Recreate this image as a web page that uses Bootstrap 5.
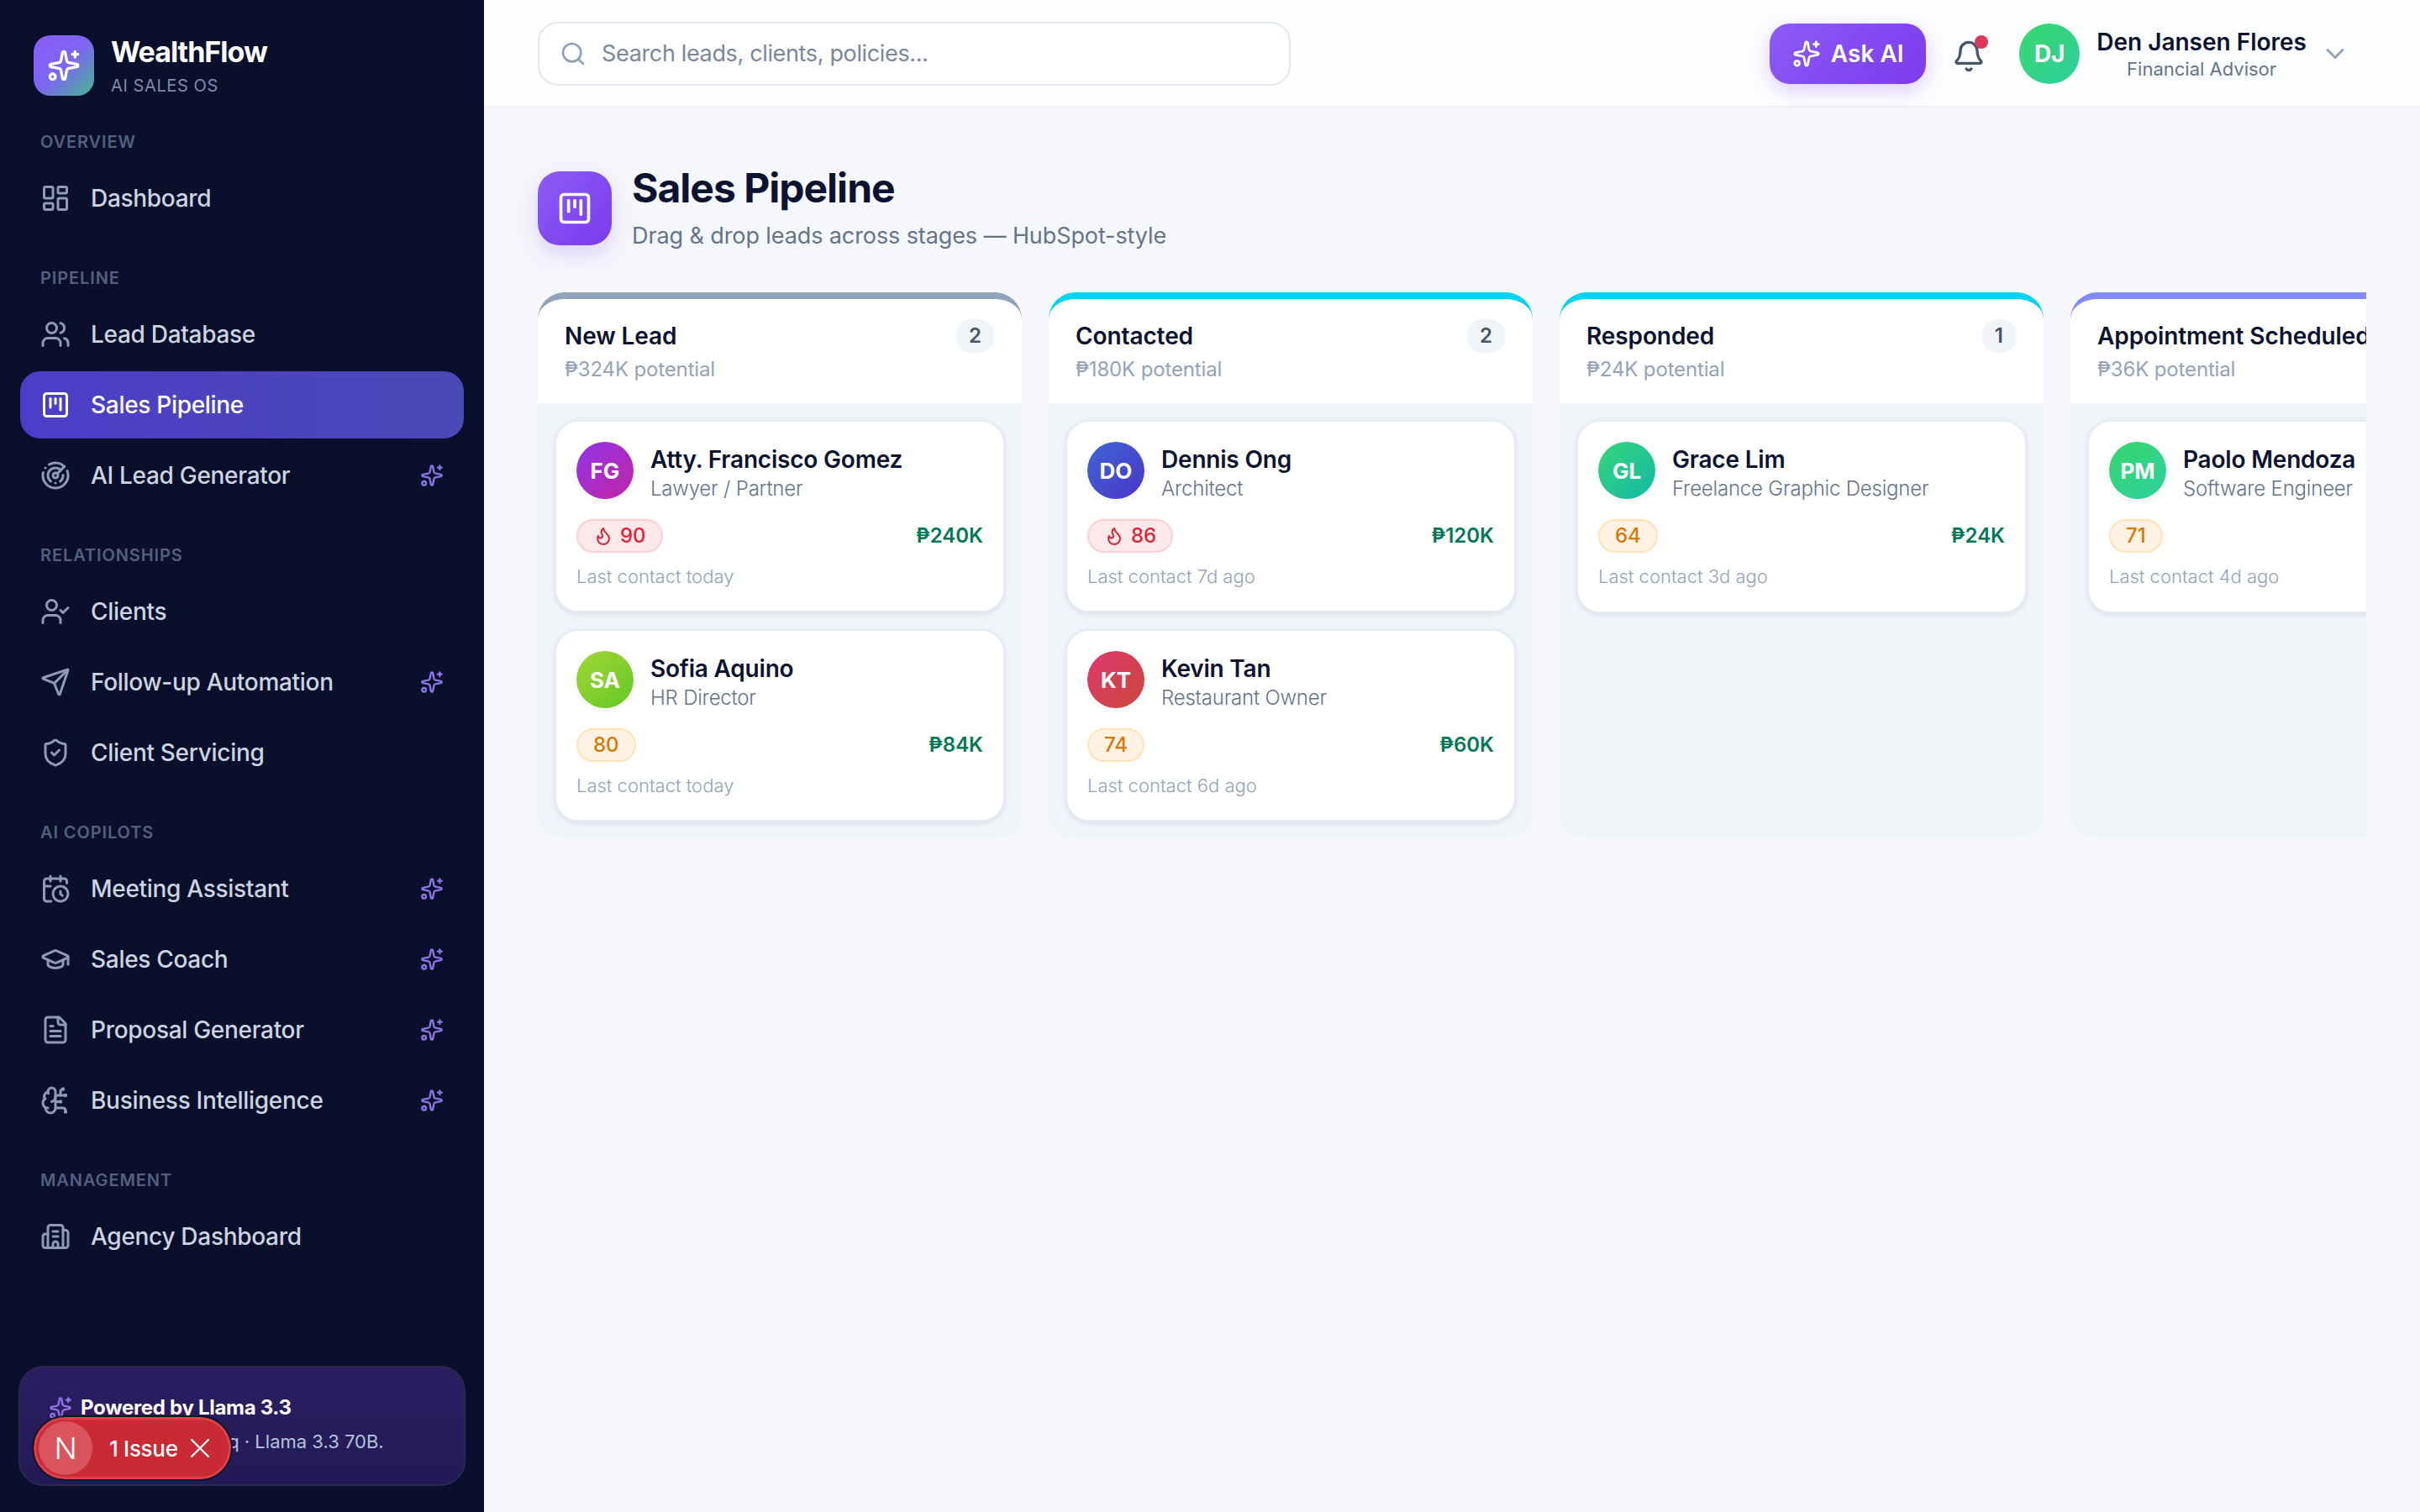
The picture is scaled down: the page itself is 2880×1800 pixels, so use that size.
<!DOCTYPE html>
<html lang="en">
<head>
<meta charset="UTF-8" />
<meta name="viewport" content="width=device-width, initial-scale=1.0" />
<title>WealthFlow - Sales Pipeline</title>
<link href="https://cdn.jsdelivr.net/npm/bootstrap@5.3.0/dist/css/bootstrap.min.css" rel="stylesheet" />
<style>
body { font-family: Inter, "Liberation Sans", sans-serif; background: #f5f7fb; color: #0b1330; font-size: 28px; }
.ico { fill: none; stroke: currentColor; stroke-width: 2; stroke-linecap: round; stroke-linejoin: round; flex-shrink: 0; }

/* sidebar */
.side { width: 576px; flex-shrink: 0; background: #0a0f2c; padding-top: 40px; }
.brand { padding-left: 40px; gap: 20px; margin-bottom: 38px; }
.brand-logo { width: 72px; height: 72px; border-radius: 20px; background: linear-gradient(135deg, #8b5cf6 0%, #7c66f2 50%, #42b98c 100%); color: #fff; }
.brand-name { font-size: 34px; line-height: 44px; font-weight: 700; color: #fff; letter-spacing: -1px; }
.brand-sub { font-size: 20px; line-height: 28px; color: #7c8bab; letter-spacing: .6px; margin-top: 4px; }
.sec { margin-bottom: 40px; }
.sec-label { font-size: 20px; line-height: 30px; font-weight: 600; color: #526080; letter-spacing: .9px; text-transform: uppercase; padding-left: 48px; margin-bottom: 12px; }
.nav-row { height: 80px; margin: 0 24px 4px; padding: 0 24px; border-radius: 24px; color: #cbd5e1; font-size: 28px; letter-spacing: -.3px; font-weight: 500; gap: 24px; text-decoration: none; }
.nav-row .ico-main { color: #8d9cb3; }
.nav-row .spark { color: #8f74e8; margin-left: auto; }
.nav-row.on { background: linear-gradient(90deg, #4c3dc8, #4a4ab6); color: #fff; }
.nav-row.on .ico-main { color: #fff; }
.llama { margin: 0 22px 31px; height: 143px; border-radius: 30px; border: 2px solid #2b2850; background: linear-gradient(180deg, #2b1e61, #221a56); padding: 30px 34px; }
.llama-top { font-size: 24px; font-weight: 700; color: #fff; gap: 10px; line-height: 36px; letter-spacing: -.3px; }
.llama-spark { color: #8f74e8; }
.llama-sub { font-size: 22px; color: #b6c3da; line-height: 32px; margin-top: 6px; white-space: nowrap; }
.issue { left: 40px; bottom: 39px; width: 235px; height: 74px; border-radius: 37px; background: #c92a34; border: 3px solid #dc4049; outline: 2px solid #111528; color: #fff; font-size: 26px; letter-spacing: -.3px; font-weight: 500; padding-left: 3px; }
.issue-n { width: 64px; height: 64px; border-radius: 50%; background: #d9545c; font-size: 36px; font-weight: 300; margin-right: 20px; }
.issue-x { margin-left: 6px; stroke-width: 1.4; }

/* top bar */
.topbar { height: 128px; background: #fdfeff; border-bottom: 2px solid #eef1f6; padding: 2px 64px 0; }
.search-box { width: 896px; height: 76px; border: 2px solid #e2e8f0; border-radius: 24px; background: #fff; padding-left: 24px; gap: 18px; }
.search-box svg { color: #8da0b8; }
.search-box input { border: 0; outline: 0; flex: 1; font-size: 27px; letter-spacing: -.35px; color: #0b1330; background: transparent; padding: 0; }
.search-box input::placeholder { color: #7b869c; opacity: 1; }
.ask-btn { height: 72px; width: 186px; border-radius: 24px; border: 0; background: linear-gradient(135deg, #8b5cf6, #7c3aed); color: #fff; font-size: 28px; font-weight: 600; gap: 12px; box-shadow: 0 8px 24px rgba(124, 58, 237, .25); }
.bell-wrap { width: 36px; height: 40px; margin: 0 44px 0 31px; color: #475569; }
.bell-dot { top: -2px; right: -7px; width: 16px; height: 16px; border-radius: 50%; background: #e0375a; }
.who-av { width: 72px; height: 72px; border-radius: 50%; background: linear-gradient(135deg, #38d86c, #2dcf9f); color: #fff; font-weight: 700; font-size: 28px; }
.who-name { font-size: 28px; font-weight: 600; line-height: 36px; }
.who-role { font-size: 22px; color: #64748b; line-height: 28px; text-align: center; }
.who-chev { color: #94a3b8; margin-right: 19px; }

/* pipeline */
.page { padding: 66px 64px 0; }
.page-icon { width: 88px; height: 88px; border-radius: 26px; background: linear-gradient(135deg, #8b5cf6, #7c3aed); color: #fff; box-shadow: 0 10px 24px rgba(124, 58, 237, .2); }
.page-title { font-size: 48px; font-weight: 700; line-height: 60px; letter-spacing: -1px; margin: 0; }
.page-sub { font-size: 27px; letter-spacing: -.1px; color: #64748b; line-height: 40px; margin-top: 7px; }
.board { gap: 32px; margin-top: 47px; }
.lane { width: 576px; flex-shrink: 0; }
.lane-head { height: 132px; background: #fff; border-top: 8px solid; border-radius: 32px 32px 0 0; padding: 24px 32px 0; }
.lane-title { font-size: 28px; font-weight: 600; line-height: 40px; white-space: nowrap; letter-spacing: -.1px; }
.lane-pot { font-size: 24px; letter-spacing: -.15px; color: #94a3b8; line-height: 36px; margin-top: 2px; }
.lane-n { height: 40px; padding: 0 16px; border-radius: 20px; background: #f1f5f9; color: #475569; font-size: 24px; font-weight: 600; }
.lane-body { background: #f1f4f9; border-radius: 0 0 32px 32px; padding: 20px; gap: 20px; height: 518px; }
.lead { height: 230px; background: #fff; border: 2px solid #e6ebf3; border-radius: 28px; padding: 24px; box-shadow: 0 2px 6px rgba(15, 23, 42, .1); }
.lead-top { gap: 20px; }
.lead-av { width: 68px; height: 68px; border-radius: 50%; color: #fff; font-weight: 700; font-size: 26px; box-shadow: 0 0 0 2px #fff, 0 2px 6px rgba(15, 23, 42, .08); flex-shrink: 0; }
.lead-txt { padding-top: 2px; }
.lead-name { font-size: 28px; font-weight: 600; letter-spacing: -.2px; line-height: 38px; white-space: nowrap; }
.lead-role { font-size: 24px; letter-spacing: -.2px; color: #64748b; line-height: 32px; white-space: nowrap; }
.lead-mid { margin-top: 20px; }
.score { height: 40px; border-radius: 20px; border: 2px solid; padding: 0 18px; font-size: 24px; font-weight: 500; gap: 8px; }
.score-hot { background: #fde8ea; border-color: #fbcfd5; color: #d92638; }
.score-warm { background: #fef3e2; border-color: #fde3b5; color: #d97706; }
.lead-val { font-size: 24px; font-weight: 600; color: #047857; }
.lead-last { font-size: 22px; color: #94a3b8; line-height: 30px; margin-top: 13px; }
.g-fg { background: linear-gradient(135deg, #9333ea, #c026a3); }
.g-do { background: linear-gradient(135deg, #3f66d6, #4a35c8); }
.g-sa { background: linear-gradient(135deg, #a3d635, #62c926); }
.g-kt { background: linear-gradient(135deg, #e0386e, #c9483c); }
.g-gl { background: linear-gradient(135deg, #34d67a, #14b8a6); }
.g-pm { background: linear-gradient(135deg, #38d86c, #2dcf9f); }
</style>
</head>
<body>
<!-- lucide icons -->
<svg width="0" height="0" class="position-absolute">
  <symbol id="i-spark" viewBox="0 0 24 24"><path d="M11.017 2.814a1 1 0 0 1 1.966 0l1.051 5.558a2 2 0 0 0 1.594 1.594l5.558 1.051a1 1 0 0 1 0 1.966l-5.558 1.051a2 2 0 0 0-1.594 1.594l-1.051 5.558a1 1 0 0 1-1.966 0l-1.051-5.558a2 2 0 0 0-1.594-1.594l-5.558-1.051a1 1 0 0 1 0-1.966l5.558-1.051a2 2 0 0 0 1.594-1.594z"/><path d="M20 2v4"/><path d="M22 4h-4"/><circle cx="4" cy="20" r="2"/></symbol>
  <symbol id="i-dash" viewBox="0 0 24 24"><rect x="3" y="3" width="7" height="9" rx="1"/><rect x="14" y="3" width="7" height="5" rx="1"/><rect x="14" y="12" width="7" height="9" rx="1"/><rect x="3" y="16" width="7" height="5" rx="1"/></symbol>
  <symbol id="i-users" viewBox="0 0 24 24"><path d="M16 21v-2a4 4 0 0 0-4-4H6a4 4 0 0 0-4 4v2"/><circle cx="9" cy="7" r="4"/><path d="M22 21v-2a4 4 0 0 0-3-3.87"/><path d="M16 3.13a4 4 0 0 1 0 7.75"/></symbol>
  <symbol id="i-kanban" viewBox="0 0 24 24"><rect x="3" y="3" width="18" height="18" rx="2"/><path d="M8 7v7"/><path d="M12 7v4"/><path d="M16 7v9"/></symbol>
  <symbol id="i-radar" viewBox="0 0 24 24"><path d="M19.07 4.93A10 10 0 0 0 6.99 3.34"/><path d="M4 6h.01"/><path d="M2.29 9.62A10 10 0 1 0 21.31 8.35"/><path d="M16.24 7.76A6 6 0 1 0 8.23 16.67"/><path d="M12 18h.01"/><path d="M17.99 11.66A6 6 0 0 1 15.77 16.67"/><circle cx="12" cy="12" r="2"/><path d="m13.41 10.59 5.66-5.66"/></symbol>
  <symbol id="i-ucheck" viewBox="0 0 24 24"><path d="M16 21v-2a4 4 0 0 0-4-4H6a4 4 0 0 0-4 4v2"/><circle cx="9" cy="7" r="4"/><polyline points="16 11 18 13 22 9"/></symbol>
  <symbol id="i-send" viewBox="0 0 24 24"><path d="M14.536 21.686a.5.5 0 0 0 .937-.024l6.5-19a.496.496 0 0 0-.635-.635l-19 6.5a.5.5 0 0 0-.024.937l7.93 3.18a2 2 0 0 1 1.112 1.11z"/><path d="m21.854 2.147-10.94 10.939"/></symbol>
  <symbol id="i-shield" viewBox="0 0 24 24"><path d="M20 13c0 5-3.5 7.5-7.66 8.95a1 1 0 0 1-.67-.01C7.5 20.5 4 18 4 13V6a1 1 0 0 1 1-1c2 0 4.5-1.2 6.24-2.72a1.17 1.17 0 0 1 1.52 0C14.51 3.81 17 5 19 5a1 1 0 0 1 1 1z"/><path d="m9 12 2 2 4-4"/></symbol>
  <symbol id="i-cal" viewBox="0 0 24 24"><path d="M21 7.5V6a2 2 0 0 0-2-2H5a2 2 0 0 0-2 2v14a2 2 0 0 0 2 2h3.5"/><path d="M16 2v4"/><path d="M8 2v4"/><path d="M3 10h5"/><path d="M17.5 17.5 16 16.3V14"/><circle cx="16" cy="16" r="6"/></symbol>
  <symbol id="i-cap" viewBox="0 0 24 24"><path d="M21.42 10.922a1 1 0 0 0-.019-1.838L12.83 5.18a2 2 0 0 0-1.66 0L2.6 9.08a1 1 0 0 0 0 1.832l8.57 3.908a2 2 0 0 0 1.66 0z"/><path d="M22 10v6"/><path d="M6 12.5V16a6 3 0 0 0 12 0v-3.5"/></symbol>
  <symbol id="i-file" viewBox="0 0 24 24"><path d="M15 2H6a2 2 0 0 0-2 2v16a2 2 0 0 0 2 2h12a2 2 0 0 0 2-2V7Z"/><path d="M14 2v4a2 2 0 0 0 2 2h4"/><path d="M10 9H8"/><path d="M16 13H8"/><path d="M16 17H8"/></symbol>
  <symbol id="i-brain" viewBox="0 0 24 24"><path d="M12 5a3 3 0 1 0-5.997.125 4 4 0 0 0-2.526 5.77 4 4 0 0 0 .556 6.588A4 4 0 1 0 12 18Z"/><path d="M9 13a4.5 4.5 0 0 0 3-4"/><path d="M6.003 5.125A3 3 0 0 0 6.401 6.5"/><path d="M3.477 10.896a4 4 0 0 1 .585-.396"/><path d="M6 18a4 4 0 0 1-1.967-.516"/><path d="M12 13h4"/><path d="M12 18h6a2 2 0 0 1 2 2v1"/><path d="M12 8h8"/><path d="M16 8V5a2 2 0 0 1 2-2"/><circle cx="16" cy="13" r=".5"/><circle cx="18" cy="3" r=".5"/><circle cx="20" cy="21" r=".5"/><circle cx="20" cy="8" r=".5"/></symbol>
  <symbol id="i-bldg" viewBox="0 0 24 24"><path d="M10 12h4"/><path d="M10 8h4"/><path d="M14 21v-3a2 2 0 0 0-4 0v3"/><path d="M6 10H4a2 2 0 0 0-2 2v7a2 2 0 0 0 2 2h16a2 2 0 0 0 2-2V9a2 2 0 0 0-2-2h-2"/><path d="M6 21V5a2 2 0 0 1 2-2h8a2 2 0 0 1 2 2v16"/></symbol>
  <symbol id="i-bell" viewBox="0 0 24 24"><path d="M10.268 21a2 2 0 0 0 3.464 0"/><path d="M3.262 15.326A1 1 0 0 0 4 17h16a1 1 0 0 0 .74-1.673C19.41 13.956 18 12.499 18 8A6 6 0 0 0 6 8c0 4.499-1.411 5.956-2.738 7.326"/></symbol>
  <symbol id="i-search" viewBox="0 0 24 24"><path d="m21 21-4.34-4.34"/><circle cx="11" cy="11" r="8"/></symbol>
  <symbol id="i-flame" viewBox="0 0 24 24"><path d="M8.5 14.5A2.5 2.5 0 0 0 11 12c0-1.38-.5-2-1-3-1.072-2.143-.224-4.054 2-6 .5 2.5 2 4.9 4 6.5 2 1.6 3 3.5 3 5.5a7 7 0 1 1-14 0c0-1.153.433-2.294 1-3a2.5 2.5 0 0 0 2.5 2.5z"/></symbol>
  <symbol id="i-chev" viewBox="0 0 24 24"><path d="m6 9 6 6 6-6"/></symbol>
  <symbol id="i-x" viewBox="0 0 24 24"><path d="M18 6 6 18"/><path d="m6 6 12 12"/></symbol>
</svg>

<div class="d-flex vh-100 overflow-hidden">
  <!-- Sidebar -->
  <aside class="side d-flex flex-column position-relative">
    <div class="brand d-flex align-items-center">
      <div class="brand-logo d-flex align-items-center justify-content-center"><svg class="ico" width="40" height="40"><use href="#i-spark"/></svg></div>
      <div>
        <div class="brand-name">WealthFlow</div>
        <div class="brand-sub">AI SALES OS</div>
      </div>
    </div>
    <nav class="flex-grow-1">
      <div class="sec">
        <div class="sec-label">Overview</div>
        <a class="nav-row d-flex align-items-center" href="#"><svg class="ico ico-main" width="36" height="36"><use href="#i-dash"/></svg>Dashboard</a>
      </div>
      <div class="sec">
        <div class="sec-label">Pipeline</div>
        <a class="nav-row d-flex align-items-center" href="#"><svg class="ico ico-main" width="36" height="36"><use href="#i-users"/></svg>Lead Database</a>
        <a class="nav-row on d-flex align-items-center" href="#"><svg class="ico ico-main" width="36" height="36"><use href="#i-kanban"/></svg>Sales Pipeline</a>
        <a class="nav-row d-flex align-items-center" href="#"><svg class="ico ico-main" width="36" height="36"><use href="#i-radar"/></svg>AI Lead Generator<svg class="ico spark" width="28" height="28"><use href="#i-spark"/></svg></a>
      </div>
      <div class="sec">
        <div class="sec-label">Relationships</div>
        <a class="nav-row d-flex align-items-center" href="#"><svg class="ico ico-main" width="36" height="36"><use href="#i-ucheck"/></svg>Clients</a>
        <a class="nav-row d-flex align-items-center" href="#"><svg class="ico ico-main" width="36" height="36"><use href="#i-send"/></svg>Follow-up Automation<svg class="ico spark" width="28" height="28"><use href="#i-spark"/></svg></a>
        <a class="nav-row d-flex align-items-center" href="#"><svg class="ico ico-main" width="36" height="36"><use href="#i-shield"/></svg>Client Servicing</a>
      </div>
      <div class="sec">
        <div class="sec-label">AI Copilots</div>
        <a class="nav-row d-flex align-items-center" href="#"><svg class="ico ico-main" width="36" height="36"><use href="#i-cal"/></svg>Meeting Assistant<svg class="ico spark" width="28" height="28"><use href="#i-spark"/></svg></a>
        <a class="nav-row d-flex align-items-center" href="#"><svg class="ico ico-main" width="36" height="36"><use href="#i-cap"/></svg>Sales Coach<svg class="ico spark" width="28" height="28"><use href="#i-spark"/></svg></a>
        <a class="nav-row d-flex align-items-center" href="#"><svg class="ico ico-main" width="36" height="36"><use href="#i-file"/></svg>Proposal Generator<svg class="ico spark" width="28" height="28"><use href="#i-spark"/></svg></a>
        <a class="nav-row d-flex align-items-center" href="#"><svg class="ico ico-main" width="36" height="36"><use href="#i-brain"/></svg>Business Intelligence<svg class="ico spark" width="28" height="28"><use href="#i-spark"/></svg></a>
      </div>
      <div class="sec">
        <div class="sec-label">Management</div>
        <a class="nav-row d-flex align-items-center" href="#"><svg class="ico ico-main" width="36" height="36"><use href="#i-bldg"/></svg>Agency Dashboard</a>
      </div>
    </nav>
    <div class="llama">
      <div class="llama-top d-flex align-items-center"><svg class="ico llama-spark" width="28" height="28"><use href="#i-spark"/></svg>Powered by Llama 3.3</div>
      <div class="llama-sub">Fast answers on Groq · Llama 3.3 70B.</div>
    </div>
    <!-- dev overlay pill -->
    <div class="issue position-absolute d-flex align-items-center">
      <span class="issue-n d-flex align-items-center justify-content-center">N</span>
      <span>1 Issue</span>
      <svg class="ico issue-x" width="40" height="40"><use href="#i-x"/></svg>
    </div>
  </aside>

  <div class="flex-grow-1 d-flex flex-column" style="min-width:0">
    <!-- Top bar -->
    <header class="topbar d-flex align-items-center flex-shrink-0">
      <div class="search-box d-flex align-items-center">
        <svg class="ico" width="32" height="32"><use href="#i-search"/></svg>
        <input type="text" placeholder="Search leads, clients, policies..." />
      </div>
      <button type="button" class="ask-btn d-flex align-items-center justify-content-center ms-auto"><svg class="ico" width="34" height="34"><use href="#i-spark"/></svg>Ask AI</button>
      <div class="bell-wrap position-relative">
        <svg class="ico" width="40" height="40"><use href="#i-bell"/></svg>
        <span class="bell-dot position-absolute"></span>
      </div>
      <div class="who-av d-flex align-items-center justify-content-center">DJ</div>
      <div class="ms-3 ps-1">
        <div class="who-name">Den Jansen Flores</div>
        <div class="who-role">Financial Advisor</div>
      </div>
      <svg class="ico who-chev ms-3" width="36" height="36"><use href="#i-chev"/></svg>
    </header>

    <!-- Page -->
    <main class="page flex-grow-1 overflow-hidden">
      <div class="d-flex align-items-center gap-4">
        <div class="page-icon d-flex align-items-center justify-content-center"><svg class="ico" width="44" height="44"><use href="#i-kanban"/></svg></div>
        <div>
          <h1 class="page-title">Sales Pipeline</h1>
          <div class="page-sub">Drag &amp; drop leads across stages — HubSpot-style</div>
        </div>
      </div>

      <div class="board d-flex overflow-hidden">
        <!-- New Lead -->
        <section class="lane">
          <div class="lane-head" style="border-color:#90a3bb">
            <div class="d-flex justify-content-between align-items-center"><span class="lane-title">New Lead</span><span class="lane-n d-flex align-items-center justify-content-center">2</span></div>
            <div class="lane-pot">₱324K potential</div>
          </div>
          <div class="lane-body d-flex flex-column">
            <div class="lead">
              <div class="lead-top d-flex"><div class="lead-av g-fg d-flex align-items-center justify-content-center">FG</div><div class="lead-txt"><div class="lead-name">Atty. Francisco Gomez</div><div class="lead-role">Lawyer / Partner</div></div></div>
              <div class="lead-mid d-flex justify-content-between align-items-center"><span class="score score-hot d-inline-flex align-items-center"><svg class="ico" width="24" height="24"><use href="#i-flame"/></svg>90</span><span class="lead-val">₱240K</span></div>
              <div class="lead-last">Last contact today</div>
            </div>
            <div class="lead">
              <div class="lead-top d-flex"><div class="lead-av g-sa d-flex align-items-center justify-content-center">SA</div><div class="lead-txt"><div class="lead-name">Sofia Aquino</div><div class="lead-role">HR Director</div></div></div>
              <div class="lead-mid d-flex justify-content-between align-items-center"><span class="score score-warm d-inline-flex align-items-center">80</span><span class="lead-val">₱84K</span></div>
              <div class="lead-last">Last contact today</div>
            </div>
          </div>
        </section>

        <!-- Contacted -->
        <section class="lane">
          <div class="lane-head" style="border-color:#00d4f5">
            <div class="d-flex justify-content-between align-items-center"><span class="lane-title">Contacted</span><span class="lane-n d-flex align-items-center justify-content-center">2</span></div>
            <div class="lane-pot">₱180K potential</div>
          </div>
          <div class="lane-body d-flex flex-column">
            <div class="lead">
              <div class="lead-top d-flex"><div class="lead-av g-do d-flex align-items-center justify-content-center">DO</div><div class="lead-txt"><div class="lead-name">Dennis Ong</div><div class="lead-role">Architect</div></div></div>
              <div class="lead-mid d-flex justify-content-between align-items-center"><span class="score score-hot d-inline-flex align-items-center"><svg class="ico" width="24" height="24"><use href="#i-flame"/></svg>86</span><span class="lead-val">₱120K</span></div>
              <div class="lead-last">Last contact 7d ago</div>
            </div>
            <div class="lead">
              <div class="lead-top d-flex"><div class="lead-av g-kt d-flex align-items-center justify-content-center">KT</div><div class="lead-txt"><div class="lead-name">Kevin Tan</div><div class="lead-role">Restaurant Owner</div></div></div>
              <div class="lead-mid d-flex justify-content-between align-items-center"><span class="score score-warm d-inline-flex align-items-center">74</span><span class="lead-val">₱60K</span></div>
              <div class="lead-last">Last contact 6d ago</div>
            </div>
          </div>
        </section>

        <!-- Responded -->
        <section class="lane">
          <div class="lane-head" style="border-color:#00d4f5">
            <div class="d-flex justify-content-between align-items-center"><span class="lane-title">Responded</span><span class="lane-n d-flex align-items-center justify-content-center">1</span></div>
            <div class="lane-pot">₱24K potential</div>
          </div>
          <div class="lane-body d-flex flex-column">
            <div class="lead">
              <div class="lead-top d-flex"><div class="lead-av g-gl d-flex align-items-center justify-content-center">GL</div><div class="lead-txt"><div class="lead-name">Grace Lim</div><div class="lead-role">Freelance Graphic Designer</div></div></div>
              <div class="lead-mid d-flex justify-content-between align-items-center"><span class="score score-warm d-inline-flex align-items-center">64</span><span class="lead-val">₱24K</span></div>
              <div class="lead-last">Last contact 3d ago</div>
            </div>
          </div>
        </section>

        <!-- Appointment Scheduled -->
        <section class="lane">
          <div class="lane-head" style="border-color:#818cf8">
            <div class="d-flex justify-content-between align-items-center"><span class="lane-title">Appointment Scheduled</span><span class="lane-n d-flex align-items-center justify-content-center">1</span></div>
            <div class="lane-pot">₱36K potential</div>
          </div>
          <div class="lane-body d-flex flex-column">
            <div class="lead">
              <div class="lead-top d-flex"><div class="lead-av g-pm d-flex align-items-center justify-content-center">PM</div><div class="lead-txt"><div class="lead-name">Paolo Mendoza</div><div class="lead-role">Software Engineer</div></div></div>
              <div class="lead-mid d-flex justify-content-between align-items-center"><span class="score score-warm d-inline-flex align-items-center">71</span><span class="lead-val">₱36K</span></div>
              <div class="lead-last">Last contact 4d ago</div>
            </div>
          </div>
        </section>
      </div>
    </main>
  </div>
</div>
<script src="https://cdn.jsdelivr.net/npm/bootstrap@5.3.0/dist/js/bootstrap.bundle.min.js"></script>
</body>
</html>
